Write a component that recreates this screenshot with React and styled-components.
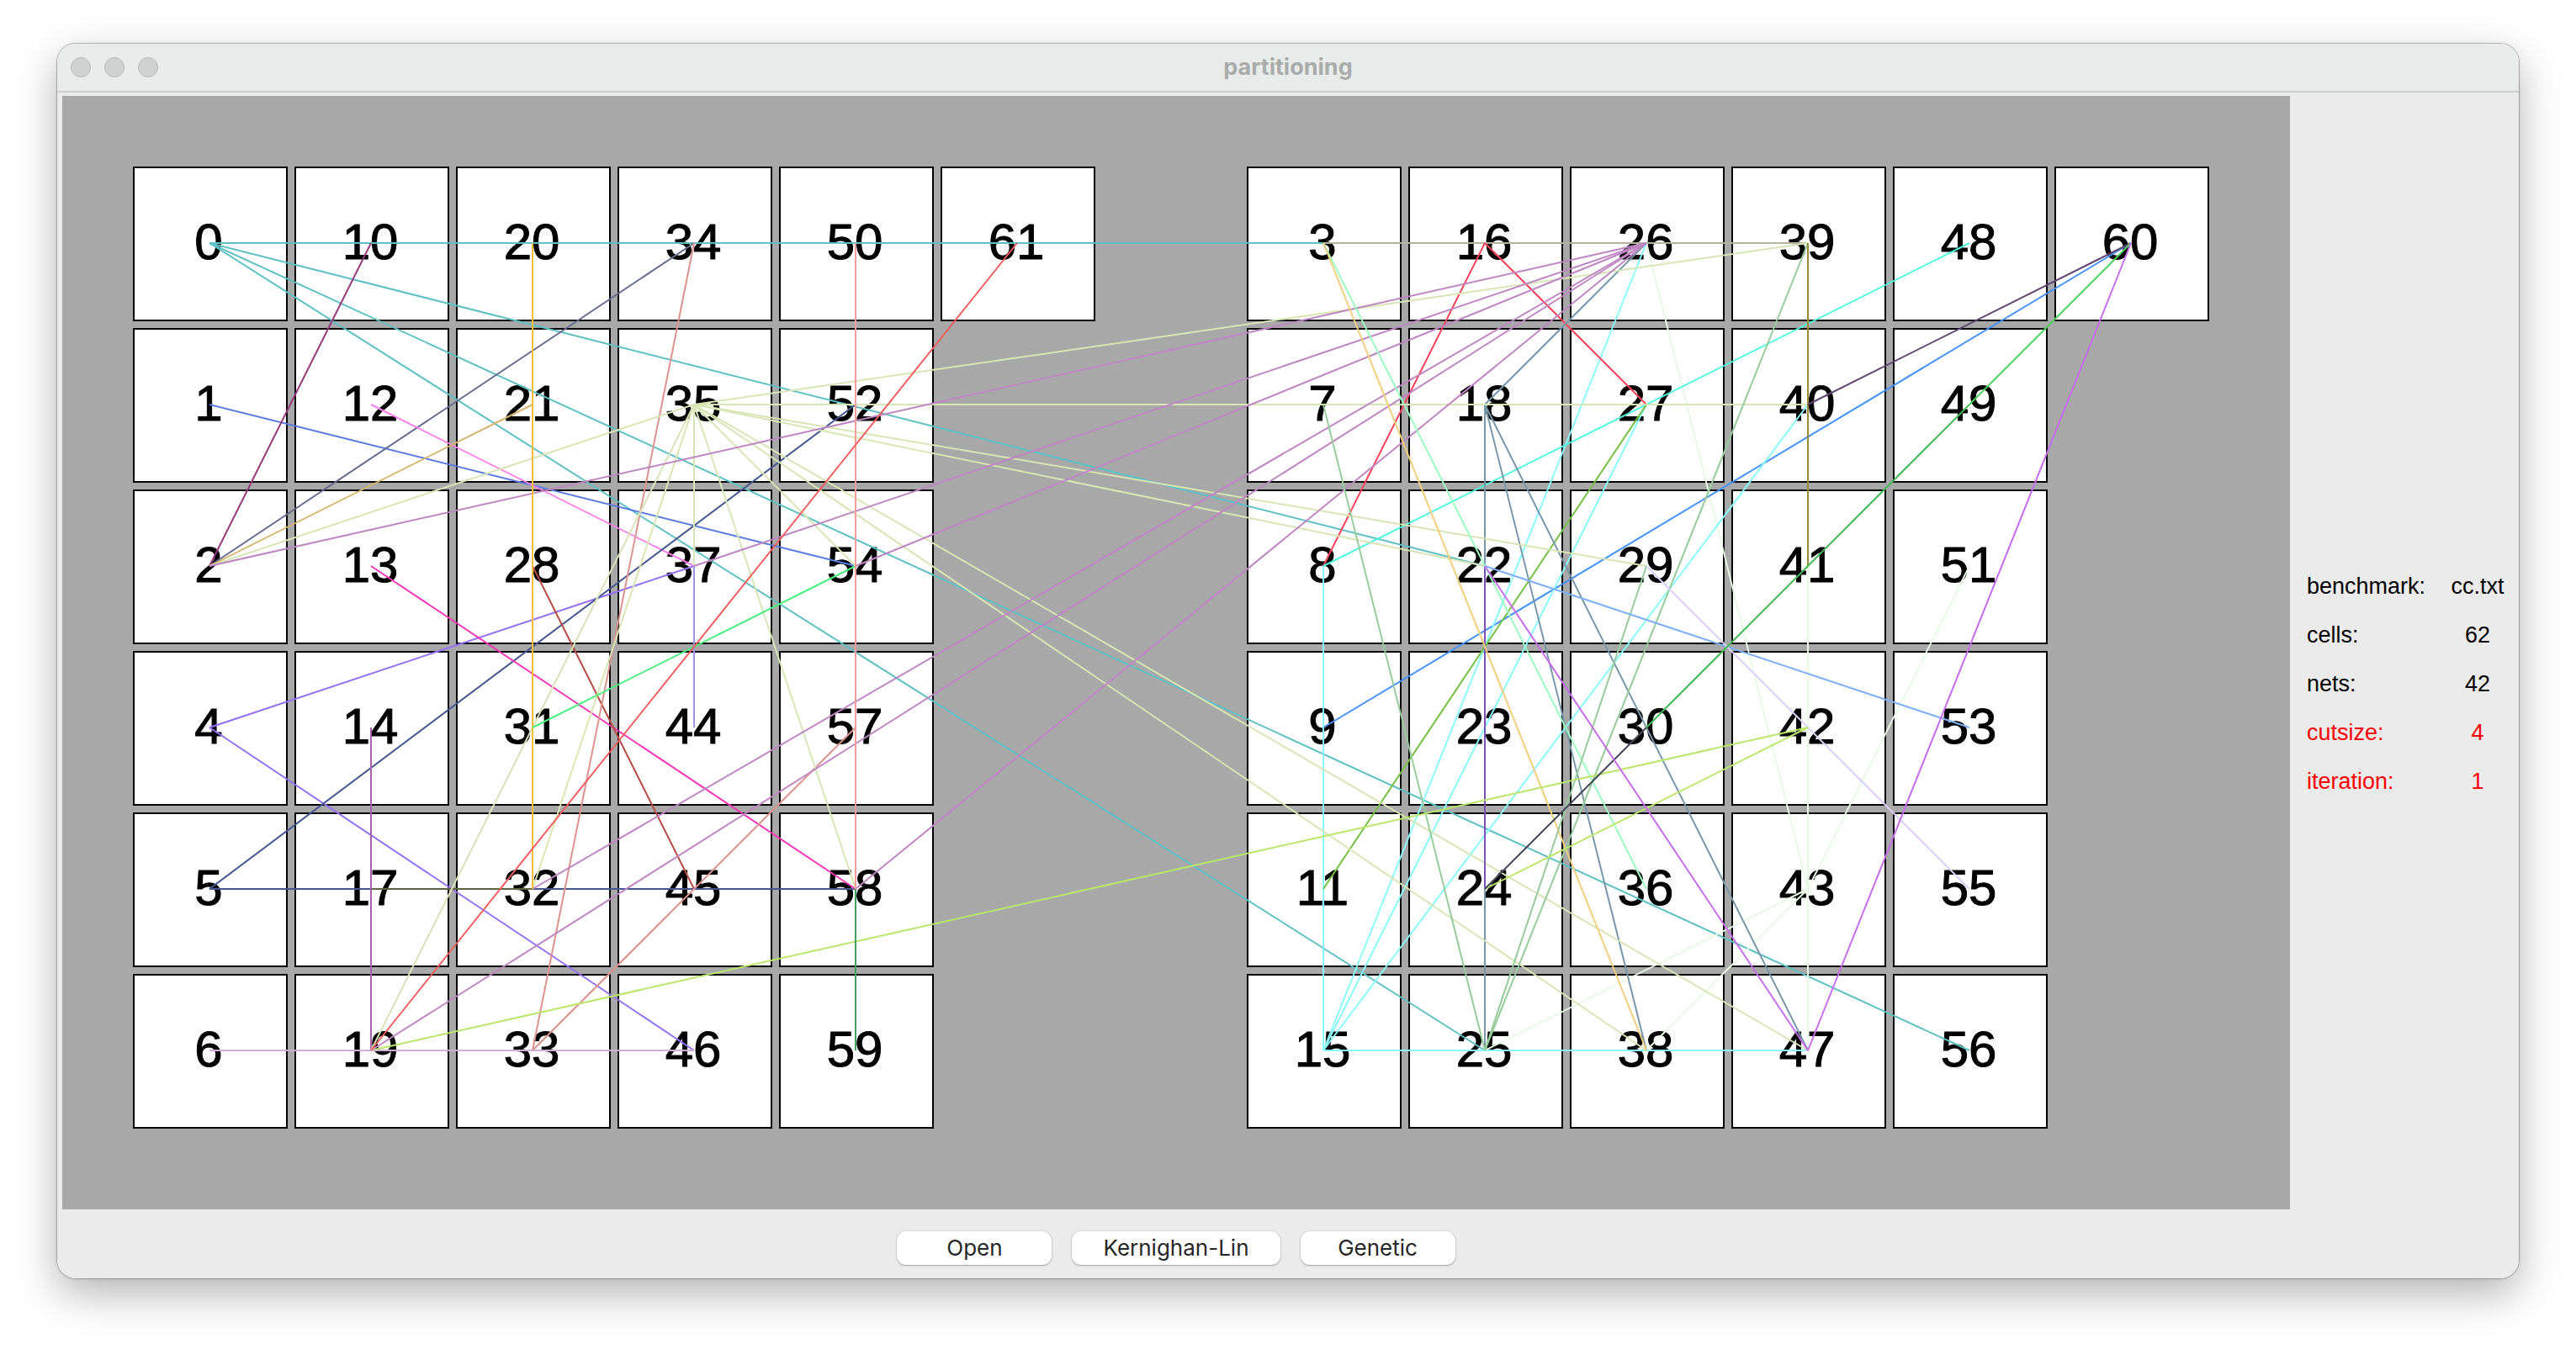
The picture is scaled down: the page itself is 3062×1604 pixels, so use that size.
import React from "react";
import styled, { createGlobalStyle } from "styled-components";

const GlobalStyle = createGlobalStyle`
  *, *::before, *::after { box-sizing: border-box; }
  body {
    margin: 0;
    background: #fff;
    font-family: "Liberation Sans", Arial, sans-serif;
    color: #000;
  }
`;

const CELL = 184;
const GAP = 8;
const PITCH = CELL + GAP;
const PAD_START = 84;
const PAD_END = 96;
const ROWS = 6;
const COLUMNS = 6;
const HALF = PAD_START + COLUMNS * PITCH - GAP + PAD_END;
const BOARD_HEIGHT = PAD_START + ROWS * PITCH - GAP + PAD_END;
const PIN = CELL / 2 - 1;

const Desktop = styled.div`
  padding: 52px 68px 84px;
`;

const Window = styled.main`
  overflow: hidden;
  border-radius: 22px;
  background: #ebebeb;
`;

const WindowShadow = styled.div`
  border-radius: 22px;
  box-shadow: 0 0 0 1px rgba(0, 0, 0, 0.22), 0 0 4px rgba(0, 0, 0, 0.12), 0 18px 50px rgba(0, 0, 0, 0.3);
`;

const TitleBar = styled.header`
  display: grid;
  grid-template-columns: 1fr auto 1fr;
  align-items: center;
  height: 58px;
  padding: 0 16px;
  border-bottom: 2px solid #cdcecd;
  background: #e9ebea;
`;

const Lights = styled.div`
  display: flex;
  gap: 16px;
`;

const Light = styled.span`
  width: 24px;
  height: 24px;
  border: 1px solid #b6b8b7;
  border-radius: 50%;
  background: #cfd1d0;
`;

const Title = styled.h1`
  margin: 0;
  font: 700 27px/32px Inter, sans-serif;
  color: #a9abaa;
`;

const Content = styled.div`
  display: flex;
  padding: 4px 0 0 6px;
`;

const Workspace = styled.div`
  flex: none;
`;

const Board = styled.section`
  position: relative;
  display: flex;
  background: #a8a8a8;
`;

const Partition = styled.div`
  display: grid;
  grid-auto-flow: column;
  grid-template-rows: repeat(${ROWS}, ${CELL}px);
  grid-template-columns: repeat(${COLUMNS}, ${CELL}px);
  gap: ${GAP}px;
  padding: ${PAD_START}px ${PAD_END}px ${PAD_END}px ${PAD_START}px;
`;

const Cell = styled.div`
  display: flex;
  align-items: center;
  justify-content: center;
  padding: 0 4px 4px 0;
  border: 2px solid #000;
  background: #fff;
  font-size: 60px;
  line-height: 68px;
  -webkit-text-stroke: 1px #000;
`;

const Nets = styled.svg`
  position: absolute;
  inset: 0;
  width: 100%;
  height: 100%;
  pointer-events: none;
`;

const Toolbar = styled.div`
  display: flex;
  justify-content: center;
  gap: 24px;
  padding: 26px 0 16px;
`;

const Button = styled.button`
  min-width: 184px;
  height: 40px;
  padding: 0 37px;
  border: 0;
  border-radius: 11px;
  background: #fff;
  box-shadow: 0 0 1px 1px rgba(0, 0, 0, 0.07), 0 1px 2px rgba(0, 0, 0, 0.28);
  font: 400 26px/32px Inter, sans-serif;
  color: #262626;
`;

const Sidebar = styled.aside`
  flex: 1;
  display: flex;
  align-items: center;
  padding: 0 10px 8px 20px;
`;

const Stats = styled.dl`
  width: 100%;
  margin: 0;
`;

const Stat = styled.div`
  display: grid;
  grid-template-columns: 1fr 78px;
  font-size: 27px;
  line-height: 58px;
  color: ${(p) => (p.$alert ? "#ff0000" : "#000")};
`;

const StatValue = styled.dd`
  margin: 0;
  text-align: center;
`;

const LEFT = [
  [0, 1, 2, 4, 5, 6],
  [10, 12, 13, 14, 17, 19],
  [20, 21, 28, 31, 32, 33],
  [34, 35, 37, 44, 45, 46],
  [50, 52, 54, 57, 58, 59],
  [61],
];

const RIGHT = [
  [3, 7, 8, 9, 11, 15],
  [16, 18, 22, 23, 24, 25],
  [26, 27, 29, 30, 36, 38],
  [39, 40, 41, 42, 43, 47],
  [48, 49, 51, 53, 55, 56],
  [60],
];

const pins = {};
[LEFT, RIGHT].forEach((columns, side) =>
  columns.forEach((column, c) =>
    column.forEach((id, r) => {
      pins[id] = [side * HALF + PAD_START + c * PITCH + PIN, PAD_START + r * PITCH + PIN];
    })
  )
);

// Each net: colour, then the pairs of cells that it joins.
const NETS = [
  ["#b3b59e", [[3, 39]]],
  ["#5fc0c4", [[0, 3], [0, 22], [0, 25], [0, 56]]],
  ["#5a7be0", [[1, 54]]],
  ["#93397c", [[10, 2]]],
  ["#646b8c", [[34, 2]]],
  ["#fb80ea", [[12, 37]]],
  ["#d6b26c", [[21, 2]]],
  ["#9570fb", [[37, 4], [4, 46]]],
  ["#45568f", [[52, 5], [5, 58]]],
  ["#5e6440", [[17, 32]]],
  ["#e6fae4", [[26, 43], [41, 47], [51, 43], [43, 25], [43, 38]]],
  ["#4490fc", [[60, 9]]],
  ["#8afbfb", [[26, 15], [27, 15], [40, 15], [8, 15], [15, 47]]],
  ["#fb4358", [[16, 8], [16, 27]]],
  ["#4dfce0", [[48, 8]]],
  ["#74c044", [[27, 11]]],
  ["#f436b4", [[13, 58]]],
  ["#a85fae", [[14, 19]]],
  ["#7898aa", [[26, 18], [18, 25], [18, 38], [18, 47]]],
  ["#b44c42", [[28, 45]]],
  ["#dc928e", [[34, 33], [57, 33]]],
  ["#d7e6b4", [[35, 2], [35, 39], [35, 40], [35, 29], [35, 22], [35, 47], [35, 38], [35, 54], [35, 58], [35, 32], [35, 19], [35, 37]]],
  ["#bf86c4", [[26, 2], [26, 37], [26, 54], [26, 32], [26, 19], [26, 58]]],
  ["#f7bd3a", [[20, 32]]],
  ["#a096e8", [[37, 44]]],
  ["#4bef7e", [[54, 31]]],
  ["#7d50b8", [[22, 24]]],
  ["#9dfcc0", [[3, 36]]],
  ["#f1cf7c", [[3, 38]]],
  ["#96cc9a", [[7, 25], [29, 25], [39, 25]]],
  ["#7eb0fa", [[22, 53]]],
  ["#dccffc", [[29, 55]]],
  ["#998a35", [[39, 41]]],
  ["#bae66a", [[19, 42], [42, 24]]],
  ["#444858", [[30, 24]]],
  ["#5f4474", [[60, 40]]],
  ["#55cf5f", [[60, 49]]],
  ["#46b755", [[49, 30]]],
  ["#c66cec", [[60, 47], [22, 47]]],
  ["#d0aed6", [[6, 46]]],
  ["#fb9c9c", [[50, 58]]],
  ["#419f60", [[58, 59]]],
  ["#f25c5c", [[61, 19]]],
];

const STATS = [
  { label: "benchmark:", value: "cc.txt" },
  { label: "cells:", value: "62" },
  { label: "nets:", value: "42" },
  { label: "cutsize:", value: "4", alert: true },
  { label: "iteration:", value: "1", alert: true },
];

function NetLines() {
  return (
    <Nets viewBox={`0 0 ${HALF * 2} ${BOARD_HEIGHT}`} aria-hidden="true">
      {NETS.map(([color, pairs]) => (
        <g key={color} stroke={color} strokeWidth="2">
          {pairs.map(([a, b]) => (
            <line key={`${a}-${b}`} x1={pins[a][0]} y1={pins[a][1]} x2={pins[b][0]} y2={pins[b][1]} />
          ))}
        </g>
      ))}
    </Nets>
  );
}

export default function App() {
  return (
    <Desktop>
      <GlobalStyle />
      <WindowShadow>
        <Window>
          <TitleBar>
            <Lights>
              <Light />
              <Light />
              <Light />
            </Lights>
            <Title>partitioning</Title>
          </TitleBar>
          <Content>
            <Workspace>
              <Board>
                {[LEFT, RIGHT].map((columns, i) => (
                  <Partition key={i}>
                    {columns.flat().map((id) => (
                      <Cell key={id}>{id}</Cell>
                    ))}
                  </Partition>
                ))}
                <NetLines />
              </Board>
              <Toolbar>
                <Button type="button">Open</Button>
                <Button type="button">Kernighan-Lin</Button>
                <Button type="button">Genetic</Button>
              </Toolbar>
            </Workspace>
            <Sidebar>
              <Stats>
                {STATS.map((s) => (
                  <Stat key={s.label} $alert={s.alert}>
                    <dt>{s.label}</dt>
                    <StatValue>{s.value}</StatValue>
                  </Stat>
                ))}
              </Stats>
            </Sidebar>
          </Content>
        </Window>
      </WindowShadow>
    </Desktop>
  );
}
